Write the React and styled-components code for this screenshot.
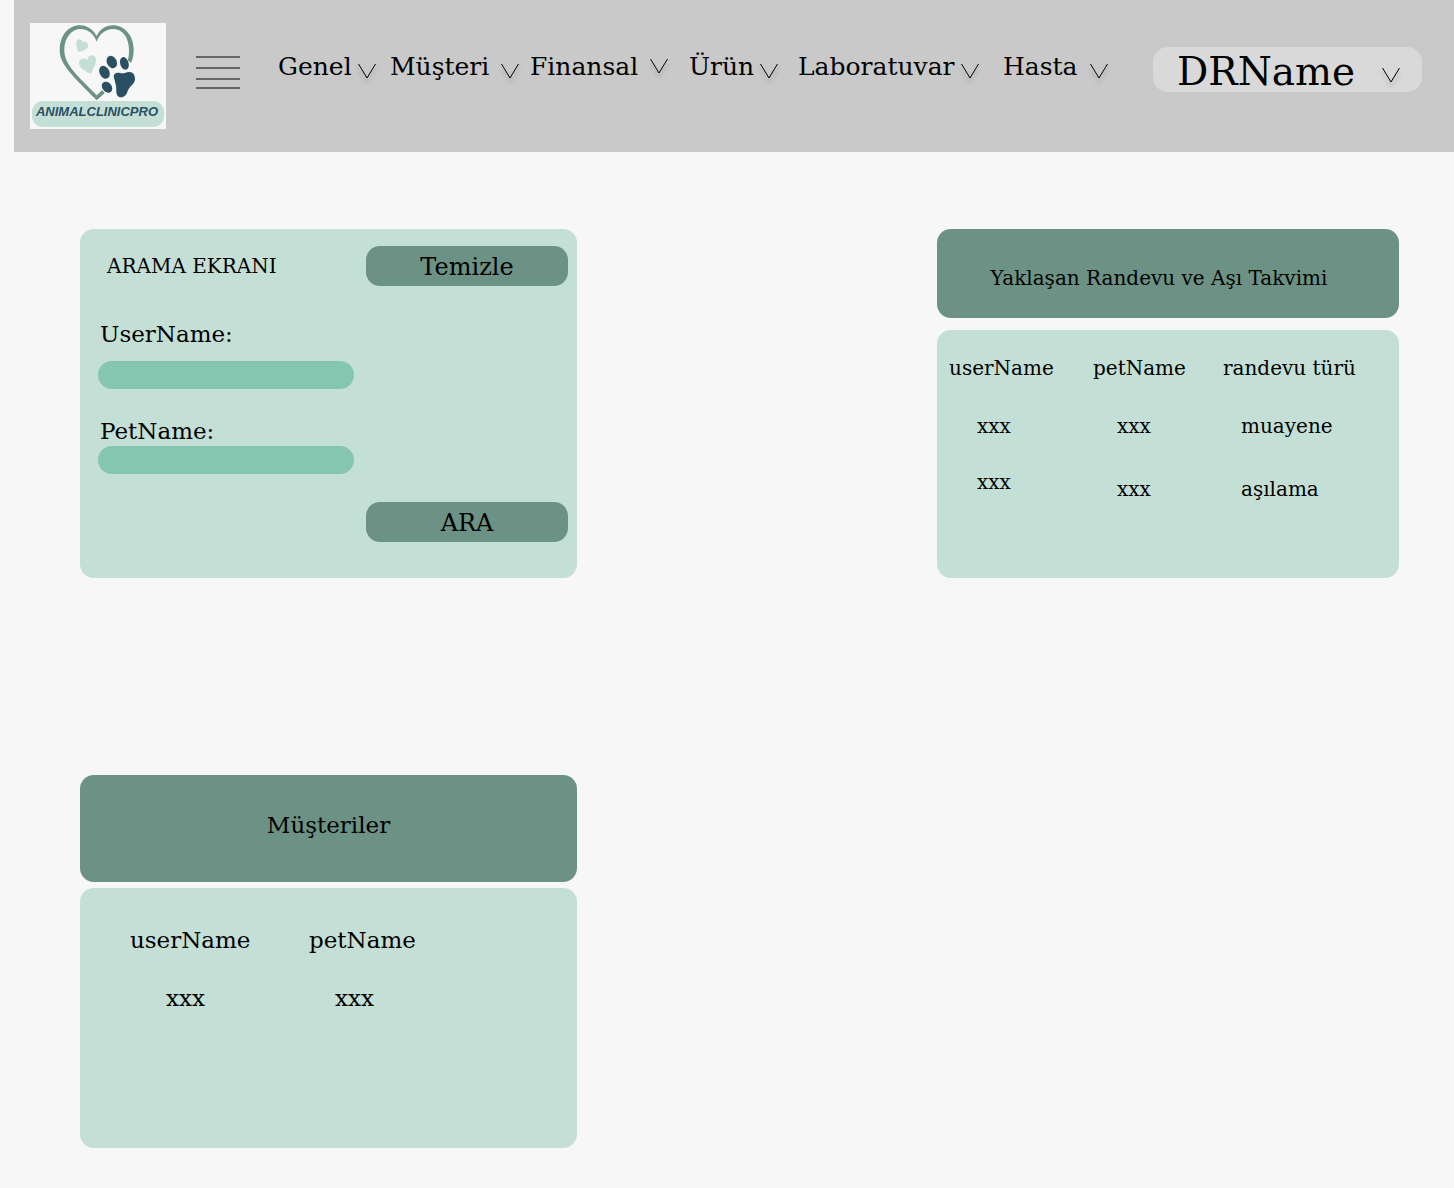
import React from 'react';
import styled, { createGlobalStyle } from 'styled-components';

const colors = {
  page: '#f7f7f7',
  bar: '#c9c9c9',
  pill: '#d9d9d9',
  mint: '#c4dfd6',
  sage: '#6c9285',
  field: '#85c6b1',
  navy: '#2a4f63',
};

const GlobalStyle = createGlobalStyle`
  *, *::before, *::after { box-sizing: border-box; }
  body {
    margin: 0;
    background: ${colors.page};
    color: #000;
    font-family: 'DejaVu Serif', serif;
  }
  button, input { font: inherit; color: inherit; border: 0; }
  button { padding: 0; background: none; cursor: pointer; }
`;

const Header = styled.header`
  display: flex;
  align-items: flex-start;
  min-height: 152px;
  margin-left: 14px;
  padding: 23px 32px 23px 16px;
  background: ${colors.bar};
`;

const LogoLink = styled.a`
  display: block;
  flex: none;
  width: 136px;
  height: 106px;
  background: ${colors.page};
`;

const LogoText = styled.text`
  font: italic bold 13px 'Liberation Sans', sans-serif;
`;

const MenuButton = styled.button`
  flex: none;
  display: flex;
  margin: 32px 38px 0 30px;
`;

const Nav = styled.nav`
  display: grid;
  grid-template-columns: 112px 140px 159px 109px 205px 126px;
  padding-top: 29px;
`;

const NavItem = styled.button`
  display: flex;
  align-items: flex-end;
  gap: ${(p) => (p.$wide ? 12 : 6)}px;
  font-size: 25px;
  line-height: 30px;
  white-space: nowrap;
`;

const Chevron = styled.svg`
  flex: none;
  width: 18px;
  height: 20px;
  overflow: visible;
  align-self: ${(p) => (p.$centered ? 'center' : 'flex-end')};
  filter: drop-shadow(0 4px 2px rgba(0, 0, 0, 0.25));
`;

const UserButton = styled.button`
  display: flex;
  align-items: flex-start;
  justify-content: space-between;
  width: 269px;
  height: 45px;
  margin: 24px 0 0 auto;
  padding: 3px 22px 6px 24px;
  border-radius: 15px;
  background: ${colors.pill};
  font-size: 39px;
  line-height: 44px;
`;

const Main = styled.main`
  display: flex;
  justify-content: space-between;
  align-items: flex-start;
  gap: 40px;
  padding: 77px 55px 40px 80px;
`;

const LeftColumn = styled.div`
  flex: 0 1 497px;
  display: flex;
  flex-direction: column;
  gap: 197px;
`;

const RightColumn = styled.div`
  flex: 0 1 462px;
`;

const SearchCard = styled.form`
  display: flex;
  flex-direction: column;
  padding: 17px 9px 36px 18px;
  border-radius: 14px;
  background: ${colors.mint};
`;

const SearchTop = styled.div`
  display: flex;
  align-items: center;
  justify-content: space-between;
  padding-left: 9px;
  margin-bottom: 34px;
`;

const SearchTitle = styled.h2`
  margin: 0;
  font-size: 20px;
  line-height: 24px;
  font-weight: normal;
`;

const ActionButton = styled.button`
  align-self: flex-end;
  width: 202px;
  height: 40px;
  padding-top: 2px;
  border-radius: 14px;
  background: ${colors.sage};
  font-size: 24px;
  line-height: 38px;
`;

const Field = styled.div`
  display: flex;
  flex-direction: column;
  align-items: flex-start;
  gap: ${(p) => p.$gap}px;
  margin-bottom: 28px;
`;

const Label = styled.label`
  padding-left: 2px;
  font-size: 23px;
  line-height: 28px;
`;

const TextInput = styled.input`
  width: 256px;
  height: 28px;
  padding: 0 14px;
  border-radius: 14px;
  background: ${colors.field};
  font-size: 20px;
`;

const Panel = styled.section`
  display: flex;
  flex-direction: column;
  gap: ${(p) => p.$gap}px;
`;

const PanelTitle = styled.h2`
  margin: 0;
  padding: ${(p) => (p.$compact ? '37px 18px 28px 0' : '36px 0 43px')};
  border-radius: 14px;
  background: ${colors.sage};
  font-size: ${(p) => (p.$compact ? 20 : 23)}px;
  line-height: ${(p) => (p.$compact ? 24 : 28)}px;
  font-weight: normal;
  text-align: center;
`;

const PanelBody = styled.div`
  min-height: ${(p) => (p.$compact ? 248 : 260)}px;
  padding: ${(p) => (p.$compact ? '26px 12px' : '38px 50px')};
  border-radius: 14px;
  background: ${colors.mint};
`;

const Table = styled.table`
  border-spacing: 0;
  font-size: ${(p) => (p.$compact ? 20 : 23)}px;
  line-height: ${(p) => (p.$compact ? 24 : 28)}px;
  text-align: left;
  white-space: nowrap;
`;

const HeadCell = styled.th`
  min-width: ${(p) => p.$width}px;
  padding: 0 0 ${(p) => (p.$compact ? 34 : 30)}px;
  font-weight: normal;
`;

const Cell = styled.td`
  height: ${(p) => (p.$tall ? 70 : 56)}px;
  padding: 0 0 32px ${(p) => p.$indent}px;
  vertical-align: ${(p) => (p.$top ? 'top' : 'middle')};
`;

const menu = [
  { label: 'Genel' },
  { label: 'Müşteri', wide: true },
  { label: 'Finansal', wide: true, centered: true },
  { label: 'Ürün' },
  { label: 'Laboratuvar' },
  { label: 'Hasta', wide: true },
];

const appointmentColumns = [
  { title: 'userName', width: 144, indent: 28 },
  { title: 'petName', width: 130, indent: 24 },
  { title: 'randevu türü', width: 130, indent: 18 },
];

const appointments = [
  { cells: ['xxx', 'xxx', 'muayene'] },
  { cells: ['xxx', 'xxx', 'aşılama'], tall: true },
];

const customerColumns = [
  { title: 'userName', width: 179, indent: 36 },
  { title: 'petName', width: 110, indent: 26 },
];

const customers = [{ cells: ['xxx', 'xxx'] }];

function DownIcon({ centered }) {
  return (
    <Chevron $centered={centered} viewBox="0 0 18 20" aria-hidden="true">
      <path d="M0.5 2L9 16L17.5 2" fill="none" stroke="#000" strokeWidth="1" />
    </Chevron>
  );
}

function Logo() {
  return (
    <svg width="136" height="106" viewBox="0 0 136 106" role="img" aria-label="AnimalClinicPro">
      <path
        fill={colors.sage}
        d="M66.7 13C62 5.5 56.5 2.3 50 2.3C38 2.3 29.7 13 29.7 27C29.7 42 43 53 66.7 77.3L74.8 69.9L72 67.2L66.7 72.3C48 53 34.3 42 34.3 27C34.3 14 42 6 50.5 6C58 6 64 11 66.7 18.7C69 11 76 6 83 6C93 6 99 15 99 27C99 31 98.8 34 97.8 37.2L101 40C103 36 103.7 31 103.7 27C103.7 12 94 2.3 83 2.3C76 2.3 70 6 66.7 13Z"
      />
      <g fill={colors.mint}>
        <path d="M48.7 29.3C46.5 25.5 46 22.5 46.3 19.5C46.8 15.5 51.3 14.8 52.8 19.2C55.8 17.8 58.6 20 58 23.3C57.3 27 53.5 27.6 48.7 29.3Z" />
        <path d="M61 50.7C55.5 48.3 50.5 46 49.2 41.5C48 36.5 53.2 33.5 57.2 37C57.8 32.3 63 30.5 65.4 34.5C67.8 39 63.2 44.5 61 50.7Z" />
      </g>
      <g fill={colors.navy}>
        <ellipse cx="81.8" cy="39" rx="4.9" ry="6.5" transform="rotate(-27 81.8 39)" />
        <ellipse cx="94.4" cy="40.4" rx="4.2" ry="6.5" transform="rotate(-17 94.4 40.4)" />
        <ellipse cx="74.5" cy="49.3" rx="4.9" ry="6.8" transform="rotate(-27 74.5 49.3)" />
        <ellipse cx="77" cy="64.2" rx="4.6" ry="6" transform="rotate(-42 77 64.2)" />
        <path d="M83.8 54C83.3 50.5 87 49 90 50C93 51 96 49.5 99 49C103 48.7 105 52 105 56C105 61 99.5 63 97.7 68C96.5 72 94 74.3 91 74.3C87.5 74.3 86 71 86.3 67C86.5 62 84.6 58 83.8 54Z" />
      </g>
      <rect x="2" y="78" width="132" height="26" rx="11" fill={colors.mint} />
      <LogoText x="67" y="93" textAnchor="middle" fill={colors.navy}>ANIMALCLINICPRO</LogoText>
    </svg>
  );
}

function DataTable({ columns, rows, compact }) {
  return (
    <Table $compact={compact}>
      <thead>
        <tr>
          {columns.map((c) => (
            <HeadCell key={c.title} scope="col" $width={c.width} $compact={compact}>{c.title}</HeadCell>
          ))}
        </tr>
      </thead>
      <tbody>
        {rows.map((row, r) => (
          <tr key={r}>
            {row.cells.map((text, i) => (
              <Cell key={i} $indent={columns[i].indent} $tall={row.tall} $top={i === 0}>{text}</Cell>
            ))}
          </tr>
        ))}
      </tbody>
    </Table>
  );
}

export default function App() {
  return (
    <>
      <GlobalStyle />
      <Header>
        <LogoLink href="#"><Logo /></LogoLink>
        <MenuButton type="button" aria-label="Menü">
          <svg width="44" height="36" viewBox="0 0 44 36" aria-hidden="true">
            <path d="M0 2H44M0 13H44M0 24H44M0 33H44" stroke="#666" strokeWidth="2" />
          </svg>
        </MenuButton>
        <Nav>
          {menu.map((m) => (
            <NavItem key={m.label} type="button" aria-haspopup="menu" $wide={m.wide}>
              {m.label}
              <DownIcon centered={m.centered} />
            </NavItem>
          ))}
        </Nav>
        <UserButton type="button" aria-haspopup="menu">
          DRName
          <DownIcon />
        </UserButton>
      </Header>
      <Main>
        <LeftColumn>
          <SearchCard onSubmit={(e) => e.preventDefault()}>
            <SearchTop>
              <SearchTitle>ARAMA EKRANI</SearchTitle>
              <ActionButton type="reset">Temizle</ActionButton>
            </SearchTop>
            <Field $gap={13}>
              <Label htmlFor="user-name">UserName:</Label>
              <TextInput id="user-name" type="text" />
            </Field>
            <Field $gap={1}>
              <Label htmlFor="pet-name">PetName:</Label>
              <TextInput id="pet-name" type="text" />
            </Field>
            <ActionButton type="submit">ARA</ActionButton>
          </SearchCard>
          <Panel $gap={6}>
            <PanelTitle>Müşteriler</PanelTitle>
            <PanelBody>
              <DataTable columns={customerColumns} rows={customers} />
            </PanelBody>
          </Panel>
        </LeftColumn>
        <RightColumn>
          <Panel $gap={12}>
            <PanelTitle $compact>Yaklaşan Randevu ve Aşı Takvimi</PanelTitle>
            <PanelBody $compact>
              <DataTable columns={appointmentColumns} rows={appointments} compact />
            </PanelBody>
          </Panel>
        </RightColumn>
      </Main>
    </>
  );
}
